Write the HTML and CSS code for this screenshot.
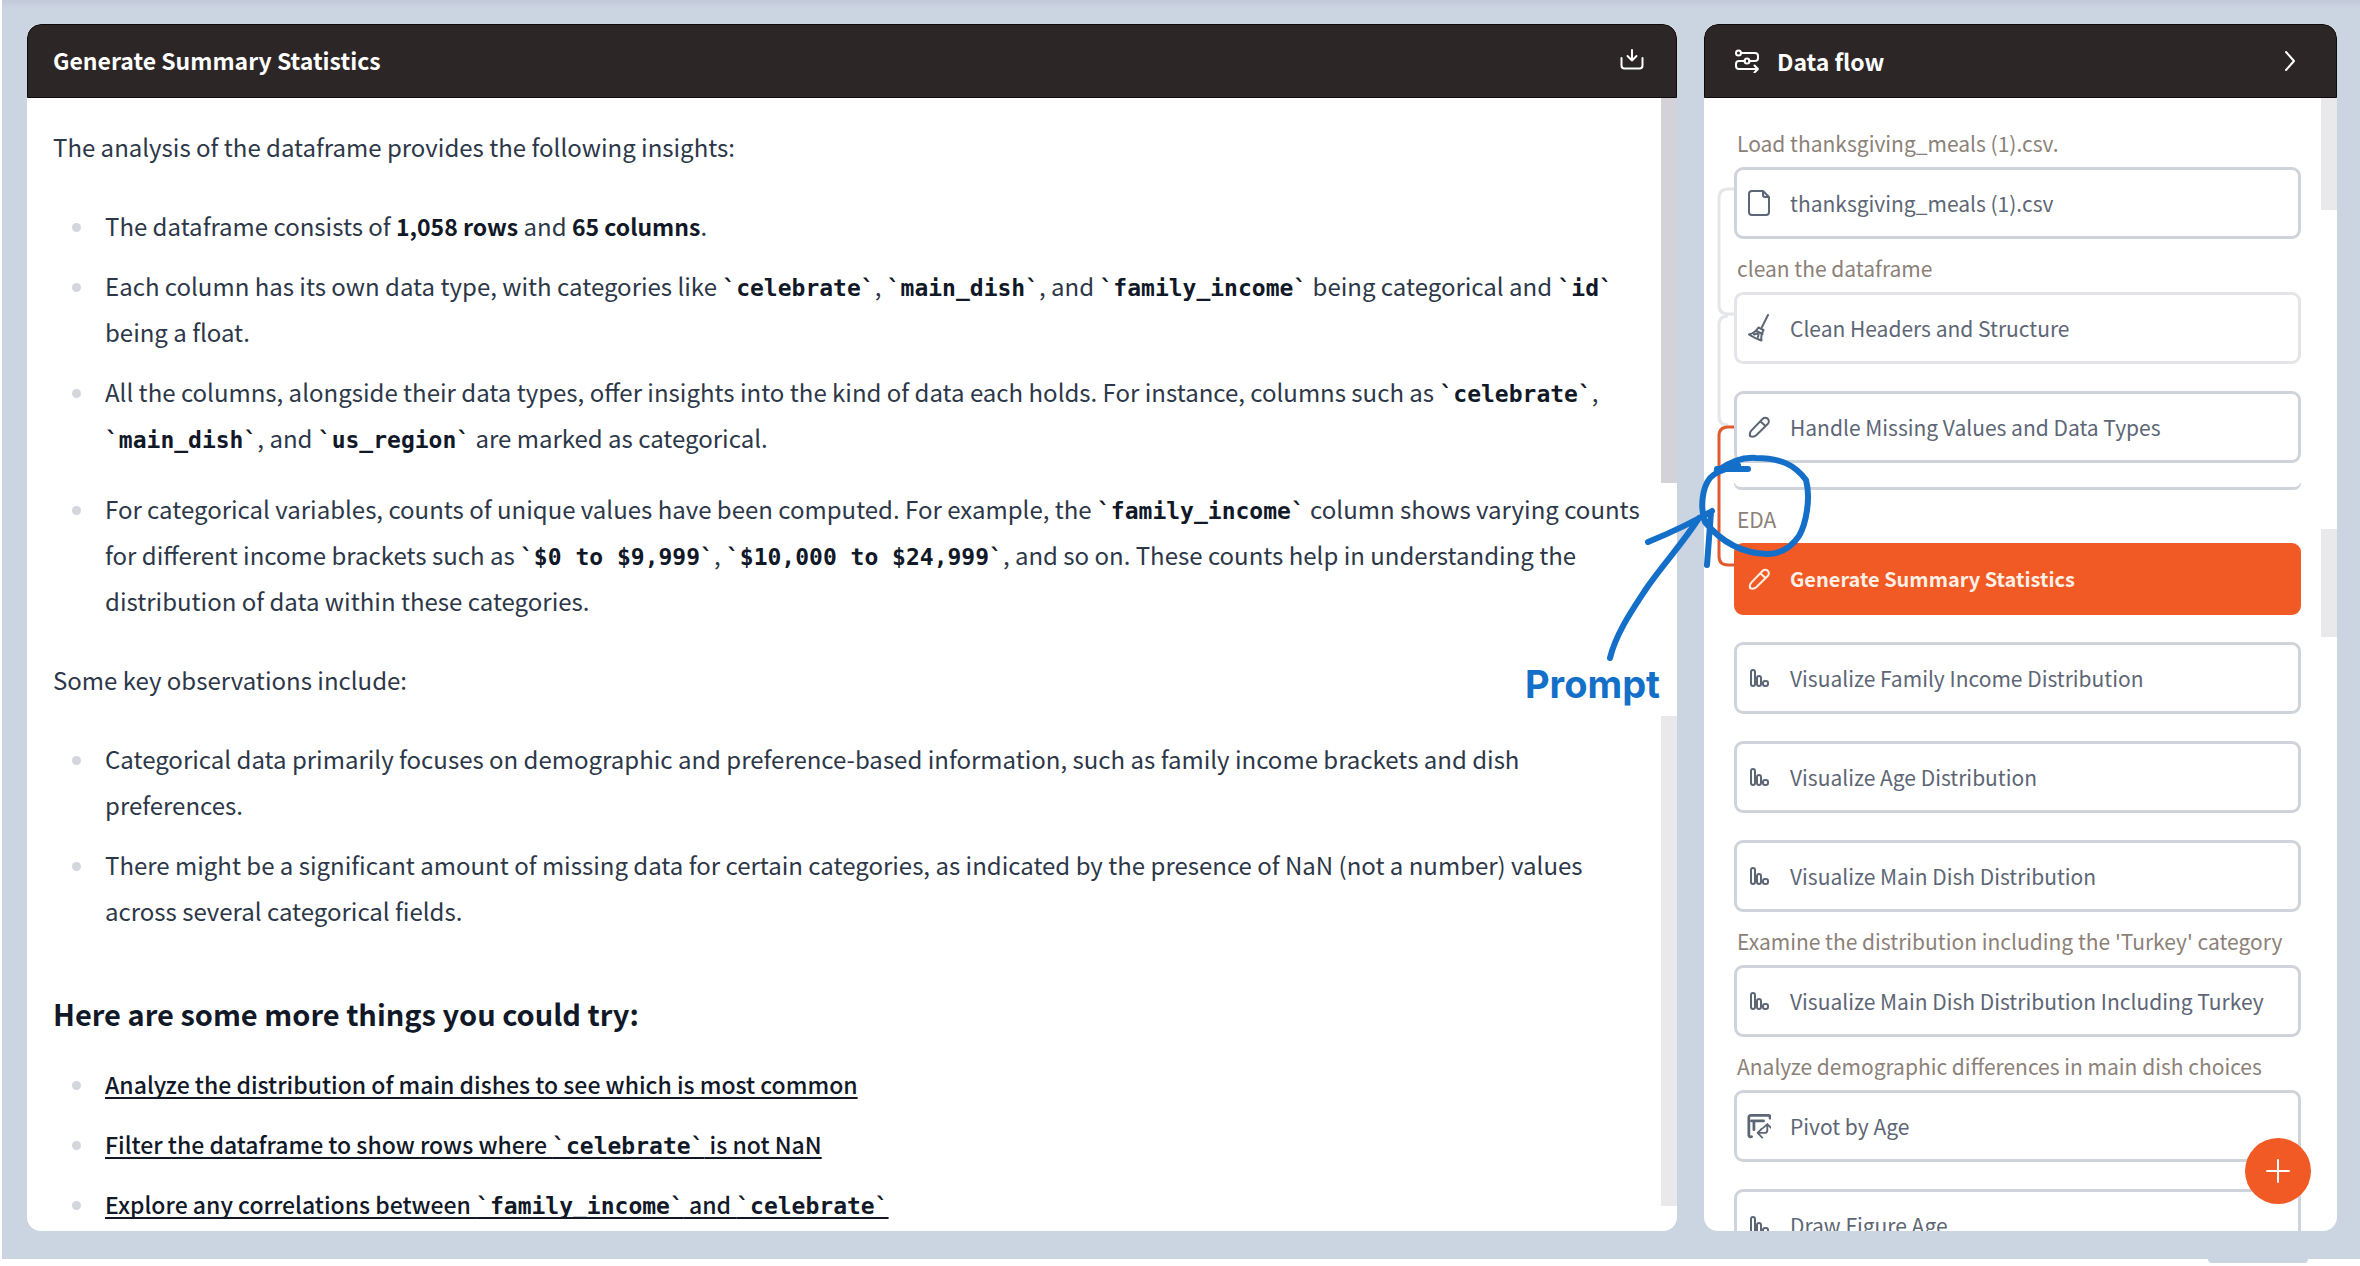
FILE: index.html
```html
<!DOCTYPE html>
<html lang="en">
<head>
<meta charset="utf-8">
<title>Generate Summary Statistics</title>
<link rel="stylesheet" href="styles.css">
</head>
<body>
<svg class="sprite" aria-hidden="true">
  <symbol id="i-bars" viewBox="0 0 24 24"><rect x="4" y="4" width="4" height="16" rx="2"/><rect x="10" y="10" width="4" height="10" rx="2"/><rect x="16" y="15" width="5" height="5" rx="2"/></symbol>
  <symbol id="i-pencil" viewBox="0 0 24 24"><path d="M3 21c-.5-2 .2-4.300 1.500-5.600L15.500 4a3.700 3.700 0 0 1 5.400 0a3.500 3.500 0 0 1-.2 5L9.500 20C8 21.400 5 22 3 21zM13.500 6.500l5 4.500"/></symbol>
  <symbol id="i-file" viewBox="0 0 24 28"><path d="M5 2h11l6 6v15a3 3 0 0 1-3 3H5a3 3 0 0 1-3-3V5a3 3 0 0 1 3-3zM16 2v4a2 2 0 0 0 2 2h4"/></symbol>
  <symbol id="i-broom" viewBox="0 0 24 28"><path d="M21 1l-6 12M11.500 13.500l5 2.500q-3 5-2 10.500Q9 25 2 20.500q6-1.500 9.500-7zM9.500 17l6 3M7 20.500l3.500-1M11 23l.5-2.500"/></symbol>
  <symbol id="i-pivot" viewBox="0 0 26 28"><path class="heavy" d="M25 5.500V4.500a2 2 0 0 0-2-2H4a2 2 0 0 0-2 2V24a2 2 0 0 0 3 1.500M5 8.500h13M7.500 9v9"/><path d="M16 17l-4.500 4.500 5 5M12 21.500h7a3 3 0 0 0 3-3V12M17.500 16l4.500-4 4 4"/></symbol>
</svg>

<div class="shell">
  <main class="panel">
    <header class="panel-head">
      <h1 class="panel-title">Generate Summary Statistics</h1>
      <button class="icon-button" type="button" aria-label="Download">
        <svg class="icon" viewBox="0 0 24 24"><path d="M1.500 10v7.500a3 3 0 0 0 3 3h15a3 3 0 0 0 3-3V10M12 2v10.500M7.500 8l4.500 4.500L16.500 8"/></svg>
      </button>
    </header>
    <div class="panel-body">
      <article class="prose">
        <p>The analysis of the dataframe provides the following insights:</p>
        <ul>
          <li>The dataframe consists of <strong>1,058 rows</strong> and <strong>65 columns</strong>.</li>
          <li>Each column has its own data type, with categories like <code>`celebrate`</code>, <code>`main_dish`</code>, and <code>`family_income`</code> being categorical and <code>`id`</code> being a float.</li>
          <li>All the columns, alongside their data types, offer insights into the kind of data each holds. For instance, columns such as <code>`celebrate`</code>, <code>`main_dish`</code>, and <code>`us_region`</code> are marked as categorical.</li>
          <li class="spaced">For categorical variables, counts of unique values have been computed. For example, the <code>`family_income`</code> column shows varying counts for different income brackets such as <code>`$0 to $9,999`</code>, <code>`$10,000 to $24,999`</code>, and so on. These counts help in understanding the distribution of data within these categories.</li>
        </ul>
        <p>Some key observations include:</p>
        <ul>
          <li>Categorical data primarily focuses on demographic and preference-based information, such as family income brackets and dish preferences.</li>
          <li>There might be a significant amount of missing data for certain categories, as indicated by the presence of NaN (not a number) values across several categorical fields.</li>
        </ul>
        <h2>Here are some more things you could try:</h2>
        <ul class="suggestions">
          <li><a href="#">Analyze the distribution of main dishes to see which is most common</a></li>
          <li><a href="#">Filter the dataframe to show rows where <code>`celebrate`</code> is not NaN</a></li>
          <li><a href="#">Explore any correlations between <code>`family_income`</code> and <code>`celebrate`</code></a></li>
        </ul>
      </article>
      <div class="rail rail-main"><span class="thumb dark"></span><span class="thumb"></span></div>
    </div>
  </main>

  <div class="side">
    <aside class="panel">
      <header class="panel-head side-head">
        <svg class="icon" viewBox="0 0 24 24"><path d="M6 4h14a3 3 0 0 1 3 3v2a3 3 0 0 1-3 3h-6M10 12H4a3 3 0 0 0-3 3v2a3 3 0 0 0 3 3h19M19.500 16.500L23 20l-3.500 3.500"/><circle cx="3.500" cy="4" r="2.500"/><circle cx="12" cy="12" r="2.500"/></svg>
        <h2 class="panel-title">Data flow</h2>
        <button class="icon-button" type="button" aria-label="Collapse">
          <svg class="icon" viewBox="0 0 24 24"><path d="M8 3l8 9-8 9"/></svg>
        </button>
      </header>
      <div class="panel-body">
        <div class="flow">
          <svg class="links" viewBox="0 0 17 400" aria-hidden="true">
            <path d="M17 13H11Q2 13 2 22V129Q2 138 11 138H17M11 140Q2 140 2 149V240Q2 249 11 249"/>
            <path class="active" d="M17 251H11Q2 251 2 260V380Q2 389 11 389H17"/>
          </svg>
          <p class="prompt">Load thanksgiving_meals (1).csv.</p>
          <button class="step" type="button"><svg class="icon tall"><use href="#i-file"/></svg>thanksgiving_meals (1).csv</button>
          <p class="prompt">clean the dataframe</p>
          <button class="step faint" type="button"><svg class="icon tall"><use href="#i-broom"/></svg>Clean Headers and Structure</button>
          <button class="step" type="button"><svg class="icon"><use href="#i-pencil"/></svg>Handle Missing Values and Data Types</button>
          <div class="cut-step"></div>
          <p class="prompt">EDA</p>
          <button class="step selected" type="button"><svg class="icon"><use href="#i-pencil"/></svg>Generate Summary Statistics</button>
          <button class="step" type="button"><svg class="icon"><use href="#i-bars"/></svg>Visualize Family Income Distribution</button>
          <button class="step" type="button"><svg class="icon"><use href="#i-bars"/></svg>Visualize Age Distribution</button>
          <button class="step" type="button"><svg class="icon"><use href="#i-bars"/></svg>Visualize Main Dish Distribution</button>
          <p class="prompt">Examine the distribution including the 'Turkey' category</p>
          <button class="step" type="button"><svg class="icon"><use href="#i-bars"/></svg>Visualize Main Dish Distribution Including Turkey</button>
          <p class="prompt">Analyze demographic differences in main dish choices</p>
          <button class="step" type="button"><svg class="icon tall"><use href="#i-pivot"/></svg>Pivot by Age</button>
          <button class="step" type="button"><svg class="icon"><use href="#i-bars"/></svg>Draw Figure Age</button>
        </div>
        <div class="rail rail-side"><span class="thumb"></span><span class="thumb"></span></div>
      </div>
      <button class="add" type="button" aria-label="Add step"><svg class="icon" viewBox="0 0 24 24"><path d="M12 1v22M1 12h22"/></svg></button>
    </aside>
    <svg class="note" viewBox="0 0 300 270">
      <path d="M90 218C96 193 113 169 126 149C143 124 160 107 179 78M128 102C145 95 170 84 192 71M191 72L187 125M197 29L228 29M197 31C211 21 223 17 236 18C261 18 275 25 286 40C291 58 286 84 279 96C270 109 260 114 247 114C218 113 198 98 185 82C180 68 182 48 190 38C198 30 207 29 218 25"/>
      <text x="5" y="258">Prompt</text>
    </svg>
  </div>
</div>
<div class="foot"><span class="foot-tab"></span></div>
</body>
</html>
```
FILE: styles.css
```css
* { box-sizing: border-box; }

body {
  margin: 0;
  height: 100vh;
  overflow: hidden;
  display: flex;
  flex-direction: column;
  padding-left: 2px;
  background: #fff;
  color: #2c3748;
  font-family: "Noto Sans CJK SC", "Noto Sans", sans-serif;
  font-size: 24px;
  line-height: 46px;
}

h1, h2, p, ul { margin: 0; padding: 0; }
button { font: inherit; color: inherit; border: 0; background: none; padding: 0; }

.sprite { display: none; }

.icon {
  flex: none;
  width: 24px;
  height: 24px;
  fill: none;
  stroke: currentColor;
  stroke-width: 2;
  stroke-linecap: round;
  stroke-linejoin: round;
  display: block;
}
.icon.tall { height: 28px; }
.heavy { stroke-width: 3; }

.shell {
  flex: 1;
  min-height: 0;
  display: grid;
  grid-template-columns: minmax(0, 1650fr) minmax(0, 633fr);
  grid-template-rows: minmax(0, 1fr);
  gap: 27px;
  padding: 24px 23px 28px 25px;
  background: linear-gradient(#c2cad9, #cbd4e1 8px);
}

.panel {
  position: relative;
  height: 100%;
  display: flex;
  flex-direction: column;
  overflow: hidden;
  border-radius: 14px;
  background: #fff;
}

.panel-head {
  flex: none;
  height: 74px;
  display: flex;
  align-items: center;
  justify-content: space-between;
  padding: 0 32px 2px 25px;
  background: #2d2626;
  border: 1px solid #0d0b0b;
  border-radius: 14px 14px 0 0;
  color: #fff;
}
.panel-title { font-size: 23px; font-weight: 700; line-height: 32px; }
.side-head { gap: 18px; padding: 0 34px 0 30px; }
.side-head .icon-button { margin-left: auto; }

.panel-body { flex: 1; min-height: 0; display: flex; }

.prose { flex: 1; min-width: 0; padding: 26px 10px 0 26px; }
.prose ul { list-style: none; padding-left: 52px; margin: 33px 0; }
.prose li { position: relative; }
.prose li + li { margin-top: 14px; }
.prose li + .spaced { margin-top: 25px; }
.prose li::before {
  content: "";
  position: absolute;
  left: -33px;
  top: 20px;
  width: 9px;
  height: 9px;
  border-radius: 50%;
  background: #d3d6dc;
}
.prose h2 { margin-top: 56px; font-size: 29px; font-weight: 700; color: #111827; }
.prose .suggestions { margin: 25px 0 0; }
.prose strong { font-size: 23px; line-height: 1; color: #111827; }
.prose code {
  font-family: "DejaVu Sans Mono", monospace;
  font-size: 23px;
  font-weight: 700;
  line-height: 1;
  color: #111827;
}
.prose a {
  font-size: 23px;
  font-weight: 500;
  color: #111827;
  text-decoration: underline 2px;
  text-underline-offset: 3px;
  text-decoration-skip-ink: none;
}

.rail { flex: none; width: 16px; display: grid; }
.rail-main { grid-template-rows: 385fr 233fr 490fr 25fr; }
.rail-side { grid-template-rows: 112fr 319fr 108fr 594fr; }
.thumb { background: #e9e9ec; }
.thumb.dark { background: #d2d2d8; }
.thumb + .thumb { grid-row: 3; }

.side { position: relative; min-width: 0; }

.flow {
  position: relative;
  flex: 1;
  min-width: 0;
  display: flex;
  flex-direction: column;
  padding: 16px 20px 0 30px;
  font-size: 21px;
  line-height: 30px;
}
.links {
  position: absolute;
  left: 13px;
  top: 78px;
  width: 17px;
  height: 400px;
  fill: none;
  stroke: #e4e6ea;
  stroke-width: 3;
}
.links .active { stroke: #e05c30; }

.prompt { flex: none; padding: 14px 3px 9px; color: #8c8178; white-space: nowrap; }

.step {
  flex: none;
  height: 72px;
  display: flex;
  align-items: center;
  gap: 19px;
  padding: 0 10px;
  border: 3px solid #cfd4da;
  border-radius: 9px;
  color: #5d6675;
  white-space: nowrap;
}
.step + .step { margin-top: 27px; }
.step.faint { border-color: #e3e5e9; }
.step.selected {
  border-color: #f15a24;
  background: #f15a24;
  color: #fff0e6;
  font-size: 20px;
  font-weight: 700;
}

.cut-step {
  flex: none;
  height: 7px;
  margin-top: 20px;
  border: solid #cfd4da;
  border-width: 0 1px 3px;
  border-radius: 0 0 9px 9px;
}

.add {
  position: absolute;
  right: 26px;
  bottom: 27px;
  width: 66px;
  height: 66px;
  display: grid;
  place-items: center;
  border-radius: 50%;
  background: #f15a24;
  color: #fff;
}

.note {
  position: absolute;
  left: -184px;
  top: 416px;
  width: 300px;
  height: 270px;
  fill: none;
  stroke: #146fc8;
  stroke-width: 6;
  stroke-linecap: round;
  stroke-linejoin: round;
  pointer-events: none;
}
.note text {
  fill: #146fc8;
  stroke: none;
  font-family: Inter, sans-serif;
  font-size: 38px;
  font-weight: 700;
}

.foot { flex: none; height: 7px; display: flex; justify-content: flex-end; padding-right: 52px; }
.foot-tab { width: 100px; height: 4px; border-radius: 0 0 8px 8px; background: #cbd4e1; }
```
